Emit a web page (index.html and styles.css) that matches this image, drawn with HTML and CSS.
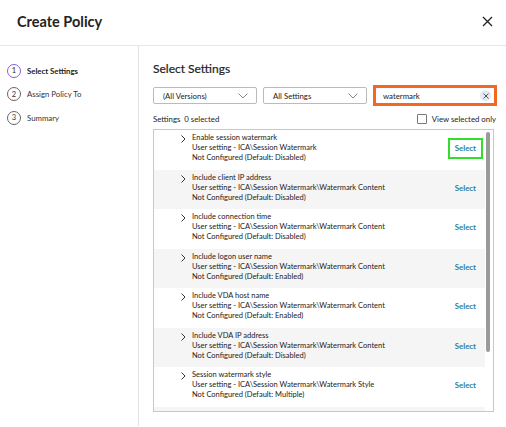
FILE: index.html
```html
<!DOCTYPE html>
<html lang="en">

<head>
    <meta charset="UTF-8">
    <title>Create Policy</title>
    <link rel="stylesheet" href="styles.css">
</head>

<body>
    <header class="top">
        <h1>Create Policy</h1>
        <svg class="close" width="11" height="11" viewBox="0 0 11 11">
            <path d="M1 1 L10 10 M10 1 L1 10" stroke="#222" stroke-width="1.3" fill="none" />
        </svg>
    </header>

    <div class="layout">
        <nav class="steps">
            <div class="step valgt"><span class="num">1</span>Select Settings</div>
            <div class="step"><span class="num">2</span>Assign Policy To</div>
            <div class="step"><span class="num">3</span>Summary</div>
        </nav>

        <main>
            <h2>Select Settings</h2>

            <div class="filters">
                <div class="dropdown">(All Versions)
                    <svg width="10" height="6" viewBox="0 0 10 6"><path d="M0.5 0.5 L5 5 L9.5 0.5" stroke="#888" fill="none" /></svg>
                </div>
                <div class="dropdown">All Settings
                    <svg width="10" height="6" viewBox="0 0 10 6"><path d="M0.5 0.5 L5 5 L9.5 0.5" stroke="#888" fill="none" /></svg>
                </div>
                <div class="search">
                    <span>watermark</span>
                    <span class="clear">
                        <svg width="6" height="6" viewBox="0 0 6 6"><path d="M0.5 0.5 L5.5 5.5 M5.5 0.5 L0.5 5.5" stroke="#555" fill="none" /></svg>
                    </span>
                </div>
            </div>

            <div class="countrow">
                <span>Settings&nbsp; 0 selected</span>
                <label class="viewsel"><span class="box"></span>View selected only</label>
            </div>

            <div class="list">
                <div class="rows">
                </div>
                <div class="scrollbar"><div class="thumb"></div></div>
            </div>
        </main>
    </div>

    <template>
        <div class="row">
            <svg class="chev" width="5" height="8" viewBox="0 0 5 8"><path d="M0.5 0.5 L4 4 L0.5 7.5" stroke="#333" fill="none" /></svg>
            <div class="info">
                <div class="navn"></div>
                <div class="sti"></div>
                <div class="status"></div>
            </div>
            <span class="select">Select</span>
        </div>
    </template>

    <script>
        let container = document.querySelector(".rows");
        let temp = document.querySelector("template");

        const indstillinger = [
            ["Enable session watermark", "User setting - ICA\\Session Watermark", "Not Configured (Default: Disabled)"],
            ["Include client IP address", "User setting - ICA\\Session Watermark\\Watermark Content", "Not Configured (Default: Disabled)"],
            ["Include connection time", "User setting - ICA\\Session Watermark\\Watermark Content", "Not Configured (Default: Disabled)"],
            ["Include logon user name", "User setting - ICA\\Session Watermark\\Watermark Content", "Not Configured (Default: Enabled)"],
            ["Include VDA host name", "User setting - ICA\\Session Watermark\\Watermark Content", "Not Configured (Default: Enabled)"],
            ["Include VDA IP address", "User setting - ICA\\Session Watermark\\Watermark Content", "Not Configured (Default: Disabled)"],
            ["Session watermark style", "User setting - ICA\\Session Watermark\\Watermark Style", "Not Configured (Default: Multiple)"],
            ["Watermark custom text", "User setting - ICA\\Session Watermark\\Watermark Content", "Not Configured"]
        ];

        indstillinger.forEach((s, i) => {
            let klon = temp.cloneNode(true).content;
            klon.querySelector(".navn").textContent = s[0];
            klon.querySelector(".sti").textContent = s[1];
            klon.querySelector(".status").textContent = s[2];
            if (i == 0) {
                klon.querySelector(".select").classList.add("markeret");
            }
            container.appendChild(klon);
        });
    </script>
</body>

</html>
```

FILE: styles.css
```css
body {
    margin: 0;
    font-family: "Lato", "Liberation Sans", sans-serif;
    color: #222;
    background-color: white;
    height: 427px;
    overflow: hidden;
}

.top {
    height: 46px;
    border-bottom: 1px solid #e6e6e6;
    display: flex;
    align-items: center;
    justify-content: space-between;
    padding: 0 13px 3px 17px;
    box-sizing: border-box;
}

h1 {
    font-size: 14.5px;
    font-weight: 700;
    margin: 0;
}

.layout {
    display: flex;
    height: 380px;
}

.steps {
    width: 139px;
    border-right: 1px solid #e3e3e3;
    padding-top: 13px;
    box-sizing: border-box;
}

.step {
    display: flex;
    align-items: center;
    gap: 6px;
    padding-left: 7px;
    height: 23.5px;
    font-size: 7.8px;
    color: #333;
}

.step.valgt {
    font-weight: 700;
    color: #222;
}

.num {
    width: 12px;
    height: 12px;
    border: 1px solid #666;
    border-radius: 50%;
    display: flex;
    align-items: center;
    justify-content: center;
    font-size: 7.5px;
    font-weight: 400;
}

.valgt .num {
    border-color: #8a5ed6;
}

main {
    flex: 1;
    padding: 15px 8px 0 14px;
}

h2 {
    font-size: 12px;
    font-weight: 400;
    margin: 0 0 9px 0;
    color: #222;
    -webkit-text-stroke: 0.2px #222;
}

.filters {
    display: flex;
    gap: 6px;
    align-items: center;
}

.dropdown {
    width: 104px;
    height: 17px;
    border: 1px solid #bbb;
    border-radius: 2px;
    box-sizing: border-box;
    font-size: 7.8px;
    display: flex;
    align-items: center;
    justify-content: space-between;
    padding: 0 8px 0 9px;
}

.search {
    width: 124px;
    height: 21px;
    border: 3px solid #f26722;
    box-sizing: border-box;
    font-size: 7.8px;
    display: flex;
    align-items: center;
    justify-content: space-between;
    padding: 0 3px 0 7px;
}

.clear {
    width: 11px;
    height: 11px;
    border-radius: 50%;
    background-color: #e2e9f3;
    display: flex;
    align-items: center;
    justify-content: center;
}

.countrow {
    display: flex;
    justify-content: space-between;
    align-items: center;
    font-size: 7.8px;
    margin-top: 3px;
    height: 20px;
}

.viewsel {
    display: flex;
    align-items: center;
    gap: 5px;
    padding-right: 2px;
}

.box {
    width: 8px;
    height: 8px;
    border: 1px solid #777;
    border-radius: 1px;
}

.list {
    border: 1px solid #c8c8c8;
    height: 283px;
    box-sizing: border-box;
    display: flex;
    overflow: hidden;
    width: 341px;
}

.rows {
    flex: 1;
}

.row {
    height: 39.5px;
    display: flex;
    align-items: flex-start;
    padding: 3px 0 0 27px;
    box-sizing: border-box;
    font-size: 7.5px;
    line-height: 10px;
}

.row:nth-child(even) {
    background-color: #f5f5f5;
}

.chev {
    margin-top: 2px;
    margin-right: 6px;
}

.info {
    flex: 1;
}

.select {
    color: #2f7f98;
    font-weight: 700;
    padding: 5px 5px;
    margin: 5px 2px 0 0;
    border: 2px solid transparent;
    line-height: 7px;
    font-size: 7.8px;
}

.select.markeret {
    border-color: #2fe02a;
}

.scrollbar {
    width: 8px;
    padding: 2px 0 0 1px;
    box-sizing: border-box;
}

.thumb {
    width: 4px;
    height: 220px;
    background-color: #9a9a9a;
    border-radius: 2px;
}
```
